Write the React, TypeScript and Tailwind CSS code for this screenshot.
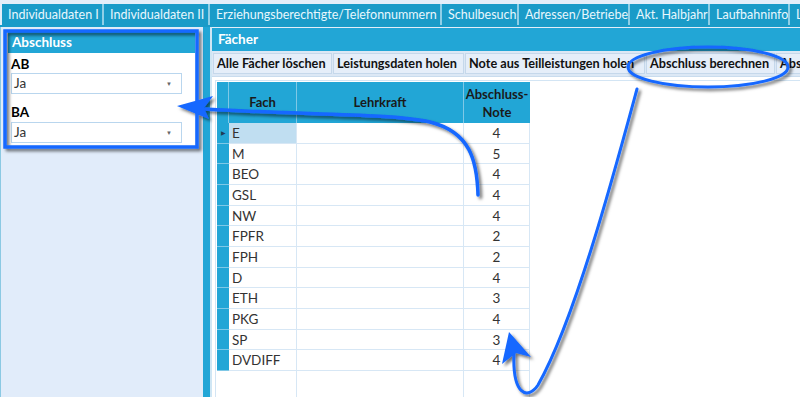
import React from "react";

const tabs = [
  { label: "Individualdaten I", w: "w-[102px]" },
  { label: "Individualdaten II", w: "w-[106px]" },
  { label: "Erziehungsberechtigte/Telefonnummern", w: "w-[232px]" },
  { label: "Schulbesuch", w: "w-[77px]" },
  { label: "Adressen/Betriebe", w: "w-[111px]" },
  { label: "Akt. Halbjahr", w: "w-[80px]" },
  { label: "Laufbahninfo", w: "w-[80px]" },
  { label: "Leistungsdaten", w: "w-[80px]" },
];

const buttons = [
  { label: "Alle Fächer löschen", w: "w-[119px]" },
  { label: "Leistungsdaten holen", w: "w-[131px]" },
  { label: "Note aus Teilleistungen holen", w: "w-[180px]" },
  { label: "Abschluss berechnen", w: "w-[129px]" },
  { label: "Abschluss drucken", w: "w-[120px]" },
];

const rows: [string, string][] = [
  ["E", "4"],
  ["M", "5"],
  ["BEO", "4"],
  ["GSL", "4"],
  ["NW", "4"],
  ["FPFR", "2"],
  ["FPH", "2"],
  ["D", "4"],
  ["ETH", "3"],
  ["PKG", "4"],
  ["SP", "3"],
  ["DVDIFF", "4"],
];

function Combo({ value }: { value: string }) {
  return (
    <div className="flex items-center justify-between h-[21px] w-[171px] border border-[#b9d6ee] bg-white px-[2px] text-[13.5px] text-[#333]">
      <span>{value}</span>
      <span className="mr-[7px] text-[6px] leading-none text-[#666]">▼</span>
    </div>
  );
}

function Annotations() {
  return (
    <svg className="absolute inset-0 pointer-events-none" width="800" height="397" viewBox="0 0 800 397">
      <defs>
        <filter id="sh" x="-10%" y="-10%" width="130%" height="130%">
          <feDropShadow dx="2.5" dy="2.5" stdDeviation="1.6" floodColor="#000" floodOpacity="0.55" />
        </filter>
      </defs>
      <g filter="url(#sh)">
        <rect x="5" y="31" width="192" height="116" fill="none" stroke="#1467ff" strokeWidth="3.5" />
        <path d="M478 195 C 477 160, 470 132, 430 122 C 390 113, 300 115, 205 109" fill="none" stroke="#1467ff" strokeWidth="3.5" strokeLinecap="round" />
        <path d="M177 106 L213 96 L204 108 L209 119 Z" fill="#1467ff" />
        <ellipse cx="708" cy="67" rx="80" ry="20" fill="none" stroke="#1467ff" strokeWidth="3" />
        <path d="M637 89 C 615 170, 575 320, 538 385 C 528 400, 512 396, 514 352" fill="none" stroke="#1467ff" strokeWidth="3" strokeLinecap="round" />
        <path d="M509 332 L531 357 L516 353 L502 364 Z" fill="#1467ff" />
      </g>
    </svg>
  );
}

export default function App() {
  return (
    <div className="relative w-[800px] h-[397px] overflow-hidden bg-[#e4eef9] font-['Lato','Segoe_UI',sans-serif]">
      <div className="pt-[4px] pl-[2px] flex h-[27px] border-b-[2px] border-[#1a9bc8]">
        {tabs.map((t) => (
          <div
            key={t.label}
            className={`${t.w} shrink-0 h-[21px] bg-[#1a9bc8] border-r-[2px] border-[#8fcfe7] pl-[6px] text-[12.5px] leading-[21px] text-[#e8f7fd] whitespace-nowrap overflow-hidden`}
          >
            {t.label}
          </div>
        ))}
      </div>

      <div className="flex h-[370px]">
        {/* left panel */}
        <div className="w-[201px] shrink-0 bg-[#e1ecfa] border-l border-[#8bc9e3] pt-[4px] pl-[7px]">
          <div className="w-[187px] bg-white">
            <div className="h-[22px] bg-[#22a6d6] pl-[4px] text-[13.5px] font-bold leading-[22px] text-white">Abschluss</div>
            <div className="px-[3px] pt-[2px] pb-[6px]">
              <div className="text-[13.5px] font-bold leading-[18px] text-black">AB</div>
              <Combo value="Ja" />
              <div className="mt-[12px] text-[13.5px] font-bold leading-[12px] text-black">BA</div>
              <div className="mt-[4px]">
                <Combo value="Ja" />
              </div>
            </div>
          </div>
        </div>

        {/* splitter */}
        <div className="w-[9px] shrink-0 flex">
          <div className="w-[2px] bg-[#e1ecfa]" />
          <div className="w-[7px] bg-[#22a6d6]" />
        </div>

        {/* right panel */}
        <div className="flex-1 flex flex-col border-l-[2px] border-[#cfe6f4] bg-[#e4eef9] pt-[1px]">
          <div className="h-[23px] shrink-0 bg-[#22a6d6] pl-[6px] text-[13.5px] font-bold leading-[23px] text-white">Fächer</div>
          <div className="h-[26px] shrink-0 flex items-center gap-[1px] bg-[#dce8f5] pl-[1px] border-b border-[#c9dcee]">
            {buttons.map((b) => (
              <div
                key={b.label}
                className={`${b.w} shrink-0 h-[21px] border border-[#c5d8eb] bg-[#e5eef9] pl-[3px] text-[12.7px] font-bold leading-[19px] text-[#111] whitespace-nowrap overflow-hidden`}
              >
                {b.label}
              </div>
            ))}
          </div>

          {/* grid */}
          <div className="flex-1 min-h-0 bg-white pt-[3px] pl-[3px]">
            <div className="h-full border-l border-t border-[#d3e5f4] pl-[1px] pt-[1px]">
              <div className="flex h-[41px]">
                <div className="w-[12px] bg-[#22a6d6] border-r border-[#7fc8e6]" />
                <div className="w-[68px] bg-[#22a6d6] border-r border-[#7fc8e6] flex items-center justify-center text-[13px] font-bold text-[#1a1a1a]">Fach</div>
                <div className="w-[167px] bg-[#22a6d6] border-r border-[#7fc8e6] flex items-center justify-center text-[13px] font-bold text-[#1a1a1a]">Lehrkraft</div>
                <div className="w-[66px] bg-[#22a6d6] flex items-center justify-center text-center text-[13px] font-bold leading-[18px] text-[#1a1a1a]">
                  Abschluss-
                  <br />
                  Note
                </div>
              </div>
              {rows.map(([fach, note], i) => (
                <div key={fach} className="flex h-[20.67px] text-[13.5px] text-[#333]">
                  <div className="w-[12px] bg-[#22a6d6] border-b border-[#7fc8e6] flex items-center justify-center">
                    {i === 0 && <span className="text-[6px] leading-none text-[#1f3c55]">▶</span>}
                  </div>
                  <div className={`w-[68px] border-r border-b border-[#d7e7f5] pl-[3px] leading-[21px] ${i === 0 ? "bg-[#c0def1]" : ""}`}>{fach}</div>
                  <div className="w-[167px] border-r border-b border-[#d7e7f5]" />
                  <div className="w-[66px] border-r border-b border-[#d7e7f5] text-center leading-[21px]">{note}</div>
                </div>
              ))}
              <div className="flex h-[30px]">
                <div className="w-[12px]" />
                <div className="w-[68px] border-r border-[#d7e7f5]" />
                <div className="w-[167px] border-r border-[#d7e7f5]" />
                <div className="w-[66px] border-r border-[#d7e7f5]" />
              </div>
            </div>
          </div>
        </div>
      </div>

      <Annotations />
    </div>
  );
}
